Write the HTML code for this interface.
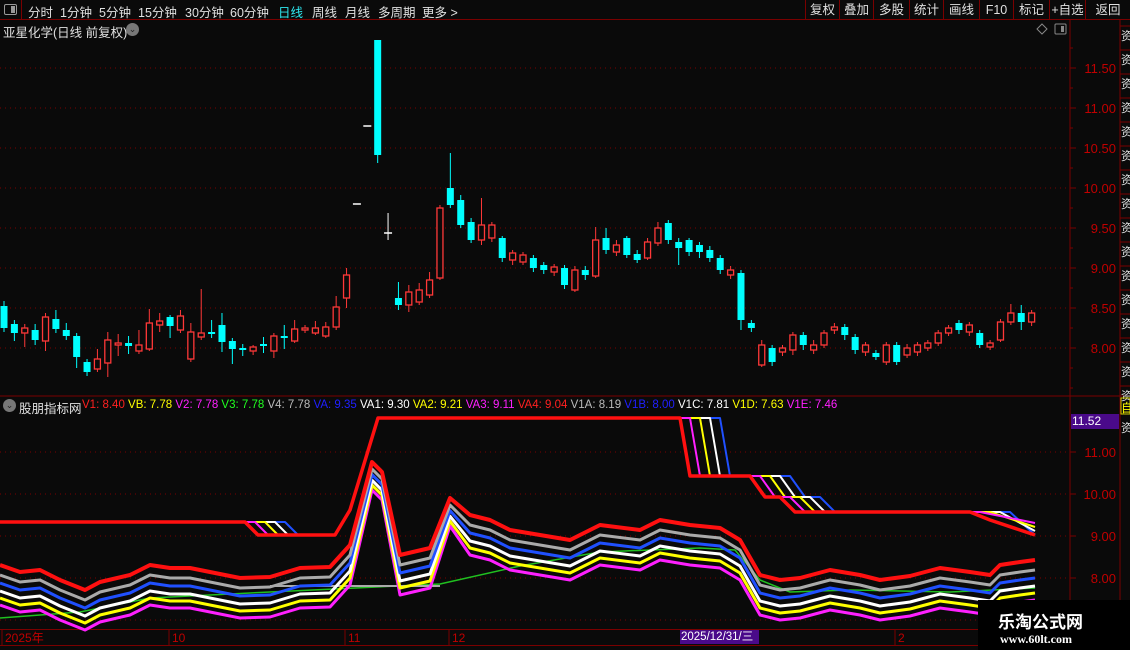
<!DOCTYPE html>
<html><head><meta charset="utf-8"><style>
*{margin:0;padding:0;box-sizing:border-box}
body{width:1130px;height:650px;background:#0a0a0a;overflow:hidden;position:relative;font-family:"Liberation Sans","Noto Sans CJK SC",sans-serif;color:#ddd;font-size:12px}
.top{position:absolute;left:0;top:0;width:1130px;height:20px;border-bottom:1px solid #7a0000;background:#0a0a0a}
.top span{position:absolute;top:2px;font-size:12.5px;color:#e0e0e0}
.btn{position:absolute;top:0;height:20px;border-left:1px solid #7a0000;color:#e0e0e0;font-size:12.5px;text-align:center;line-height:20px}
.abs{position:absolute;white-space:nowrap}
</style></head><body>
<div class="top">
<div class="abs" style="left:0;top:0;width:22px;height:20px;border-right:1px solid #7a0000"><div style="position:absolute;left:4px;top:4px;width:13px;height:11px;border:1px solid #999;border-radius:2px"><div style="position:absolute;right:1px;top:1px;width:4px;height:7px;background:#999"></div></div></div>
<span style="left:28px">分时</span><span style="left:60px">1分钟</span><span style="left:99px">5分钟</span><span style="left:138px">15分钟</span><span style="left:185px">30分钟</span><span style="left:230px">60分钟</span><span style="left:278px;color:#2ee8f0">日线</span><span style="left:312px">周线</span><span style="left:345px">月线</span><span style="left:378px">多周期</span><span style="left:422px">更多 &gt;</span>
<div class="btn" style="left:805px;width:34px">复权</div><div class="btn" style="left:839px;width:34px">叠加</div><div class="btn" style="left:873px;width:36px">多股</div><div class="btn" style="left:909px;width:34px">统计</div><div class="btn" style="left:943px;width:36px">画线</div><div class="btn" style="left:979px;width:34px">F10</div><div class="btn" style="left:1013px;width:36px">标记</div><div class="btn" style="left:1049px;width:36px">+自选</div><div class="btn" style="left:1085px;width:45px">返回</div>
</div>
<div class="abs" style="left:3px;top:22px;font-size:12.5px;color:#e0e0e0">亚星化学(日线 前复权)</div>
<div class="abs" style="left:126px;top:23px;width:13px;height:13px;border-radius:50%;background:#777;color:#222;font-size:9px;text-align:center;line-height:13px">⌄</div>
<div class="abs" style="left:3px;top:399px;width:13px;height:13px;border-radius:50%;background:#777;color:#222;font-size:9px;text-align:center;line-height:13px">⌄</div>
<div class="abs" style="left:19px;top:398px;font-size:12.5px;color:#e0e0e0">股朋指标网</div>
<div class="abs" style="left:82px;top:399px;font-size:11.5px"><span style="color:#ff2020">V1: 8.40</span> <span style="color:#ffff00">VB: 7.78</span> <span style="color:#ff20ff">V2: 7.78</span> <span style="color:#20ff20">V3: 7.78</span> <span style="color:#bbb">V4: 7.78</span> <span style="color:#2020ff">VA: 9.35</span> <span style="color:#fff">VA1: 9.30</span> <span style="color:#ffff00">VA2: 9.21</span> <span style="color:#ff20ff">VA3: 9.11</span> <span style="color:#ff2020">VA4: 9.04</span> <span style="color:#bbb">V1A: 8.19</span> <span style="color:#2020ff">V1B: 8.00</span> <span style="color:#fff">V1C: 7.81</span> <span style="color:#ffff00">V1D: 7.63</span> <span style="color:#ff20ff">V1E: 7.46</span></div>
<svg id="s" class="abs" style="left:0;top:0" width="1130" height="650"></svg>
<div class="abs" style="left:1071px;top:414px;width:48px;height:15px;background:#4a0a8a;color:#fff;font-size:12px;line-height:15px;padding-left:1px">11.52</div>
<div class="abs" style="left:680px;top:630px;width:79px;height:14px;background:#4a0a8a;color:#fff;font-size:11.5px;line-height:14px;padding-left:1px">2025/12/31/三</div>
<div class="abs" style="left:978px;top:600px;width:152px;height:50px;background:#000"></div>
<div class="abs" style="left:998px;top:608px;font-size:17px;font-weight:bold;color:#fff;font-family:'Noto Sans CJK SC',sans-serif">乐淘公式网</div>
<div class="abs" style="left:1000px;top:632px;font-size:12px;font-weight:bold;color:#fff;font-family:'Liberation Serif',serif">www.60lt.com</div>
<script>
const S=document.getElementById('s');let h='';
const R='#ff3838',C='#00ffff',D='#7a0000';
h+=`<line x1="1070" y1="20" x2="1070" y2="650" stroke="${D}"/><line x1="1120" y1="20" x2="1120" y2="650" stroke="${D}"/>`;
h+=`<line x1="0" y1="396" x2="1130" y2="396" stroke="${D}"/><line x1="0" y1="629.5" x2="1070" y2="629.5" stroke="${D}"/><line x1="0" y1="645.5" x2="1070" y2="645.5" stroke="${D}"/>`;
[[11.5,68],[11,108],[10.5,148],[10,188],[9.5,228],[9,268],[8.5,308],[8,348]].forEach(([p,y])=>{h+=`<line x1="0" y1="${y}" x2="1068" y2="${y}" stroke="${D}" stroke-dasharray="1,4"/><line x1="1070" y1="${y}" x2="1076" y2="${y}" stroke="${D}"/><text x="1116" y="${y+5}" fill="#c00000" font-size="13" text-anchor="end">${p.toFixed(2)}</text>`;});
for(let y=48;y<390;y+=20)h+=`<line x1="1070" y1="${y}" x2="1073" y2="${y}" stroke="${D}"/>`;
[[11,452],[10,494],[9,536],[8,578]].forEach(([p,y])=>{h+=`<line x1="0" y1="${y}" x2="1068" y2="${y}" stroke="${D}" stroke-dasharray="1,4"/><line x1="1070" y1="${y}" x2="1076" y2="${y}" stroke="${D}"/><text x="1116" y="${y+5}" fill="#c00000" font-size="13" text-anchor="end">${p.toFixed(2)}</text>`;});
h+=`<line x1="0" y1="620" x2="1068" y2="620" stroke="${D}" stroke-dasharray="1,4"/>`;
for(let y=26;y<395;y+=24)h+=`<text x="1121" y="${y+14}" fill="#ddd" font-size="12">资</text><line x1="1120" y1="${y}" x2="1130" y2="${y}" stroke="${D}"/>`;
h+=`<rect x="1121" y="398" width="9" height="16" fill="none" stroke="#cc0"/><text x="1121" y="412" fill="#ff0" font-size="12">自</text><text x="1121" y="432" fill="#ddd" font-size="12">资</text>`;
h+=`<path d="M1042 24 L1047 29 L1042 34 L1037 29Z" fill="none" stroke="#888"/><rect x="1055" y="24" width="11" height="10" rx="1" fill="none" stroke="#888"/><rect x="1061" y="26" width="3" height="6" fill="#888"/>`;
[['2025年',5],['10',172],['11',348],['12',452],['2',898]].forEach(([t,x])=>{h+=`<text x="${x}" y="642" fill="#c00000" font-size="12">${t}</text><line x1="${x-3}" y1="630" x2="${x-3}" y2="645" stroke="${D}"/>`;});
const K=[[306,328,301,332,C],[324,333,320,341,C],[328,333,324,347,R],[330,340,324,345,C],[317,341,313,351,R],[319,329,310,333,C],[330,336,323,340,C],[336,357,333,368,C],[362,372,359,376,C],[359,369,349,372,R],[340,363,332,377,R],[343,345,334,356,R],[343,346,336,354,C],[345,351,330,354,R],[323,349,309,351,R],[321,325,313,332,R],[317,326,315,338,C],[316,330,310,333,R],[332,359,323,362,R],[333,337,289,340,R],[332,333,320,338,C],[325,342,313,352,C],[341,349,338,364,C],[348,349,344,356,C],[347,351,345,355,R],[344,345,337,353,C],[336,351,333,358,R],[336,337,325,349,C],[329,341,320,343,R],[328,330,325,333,R],[328,333,321,335,R],[327,336,322,338,R],[307,327,296,330,R],[275,298,268,308,R],[204,205,204,205,'#fff'],[126,127,126,127,'#fff'],[40,155,40,163,C],[233,234,213,240,'#fff'],[298,305,282,310,C],[292,305,285,312,R],[290,302,283,305,R],[280,295,272,298,R],[208,278,205,280,R],[188,205,153,208,C],[200,225,195,228,C],[222,240,218,243,C],[225,240,198,245,R],[225,238,222,242,R],[238,258,236,262,C],[253,260,250,265,R],[255,262,252,265,R],[258,268,255,272,C],[265,270,262,274,C],[267,272,264,276,R],[268,285,265,289,C],[270,290,266,292,R],[270,275,266,280,C],[240,276,227,278,R],[238,250,228,254,C],[245,252,240,256,R],[238,255,236,258,C],[254,260,250,263,C],[242,258,238,260,R],[228,243,222,246,R],[223,240,220,244,C],[242,248,238,265,C],[240,252,238,256,C],[245,252,242,258,C],[250,258,246,262,C],[258,270,255,274,C],[270,275,266,279,R],[273,320,270,330,C],[323,328,320,332,C],[345,365,340,367,R],[348,362,345,366,C],[348,352,345,356,R],[335,350,332,355,R],[335,345,332,350,C],[345,350,340,354,R],[333,345,330,348,R],[327,330,323,334,R],[327,335,324,340,C],[337,350,334,354,C],[345,352,342,356,R],[353,357,350,360,C],[345,362,342,365,R],[345,362,342,365,C],[348,355,344,358,R],[345,352,342,356,R],[343,348,340,351,R],[333,343,330,346,R],[328,333,325,336,R],[323,330,320,334,C],[325,332,322,336,R],[333,345,330,348,C],[343,347,340,350,R],[322,340,319,342,R],[313,322,304,325,R],[313,322,305,330,C],[313,322,310,326,R]];
K.forEach((k,i)=>{const x=4+i*10.38;let[o,c,hh,l,col]=k;const t=Math.min(o,c),b=Math.max(o,c);
 if(col==='#fff'){h+=`<line x1="${x-4}" y1="${o}" x2="${x+4}" y2="${o}" stroke="#fff" stroke-width="1.5"/>`;if(l-hh>3)h+=`<line x1="${x}" y1="${hh}" x2="${x}" y2="${l}" stroke="#fff"/>`;return;}
 h+=`<line x1="${x}" y1="${hh}" x2="${x}" y2="${l}" stroke="${col}"/>`;
 if(col===C)h+=`<rect x="${x-3.5}" y="${t}" width="7" height="${Math.max(b-t,2)}" fill="${C}"/>`;
 else h+=`<rect x="${x-3}" y="${t}" width="6" height="${Math.max(b-t,2)}" fill="#0a0a0a" stroke="${R}" stroke-width="1.3"/>`;});
const base=[[0,565],[20,572],[40,570],[60,580],[85,590],[100,582],[130,575],[150,565],[170,568],[190,568],[210,572],[240,578],[270,577],[300,568],[330,567],[350,545],[372,462],[382,472],[400,555],[430,548],[450,498],[470,515],[490,520],[510,530],[540,535],[570,540],[600,525],[640,530],[660,520],[690,525],[720,528],[740,540],[760,575],[780,580],[800,578],[830,570],[860,575],[880,580],[910,576],[940,568],[970,572],[990,575],[1000,565],[1020,562],[1035,560]];
const pl=(pts,col,w)=>`<polyline points="${pts.map(p=>p.join(',')).join(' ')}" fill="none" stroke="${col}" stroke-width="${w}" stroke-linejoin="round"/>`;
h+=pl([[0,618],[80,612],[150,598],[270,592],[440,584],[520,566],[600,552],[700,548],[735,550],[760,580],[790,592],[850,590],[950,592],[1035,588]],'#20c020',1.5);
h+=pl([[270,586],[440,586]],'#aaa',2);
[[40,'#ff20ff'],[33,'#ffff00'],[26,'#ffffff'],[18,'#2050ff'],[10,'#aaaaaa'],[0,'#ff1010']].forEach(([o,c])=>{
 h+=pl(base.map(([x,y])=>[x,y+o*(y<500?0.7:1)]),c,o?3:4);});
const drops=[[245,522,258,535],[680,418,690,476],[750,476,765,497],[780,497,795,512],[970,512,1035,535]];
[[40,'#2050ff'],[30,'#fff'],[20,'#ffff00'],[10,'#ff20ff']].forEach(([o,c])=>{drops.forEach(([x1,y1,x2,y2])=>{
 if(x2-x1>30){h+=pl([[x1,y1],[x1+o,y1],[x2,y2-(40-o)*0.4]],c,2);}
 else h+=pl([[x1,y1],[x1+o,y1],[x2+o,y2],[x2,y2]],c,2);});});
const st=[[0,522],[245,522],[258,535],[335,535],[350,510],[378,418],[680,418],[690,476],[750,476],[765,497],[780,497],[795,512],[970,512],[990,520],[1035,535]];
h+=pl(st,'#ff1010',3.5);
S.innerHTML=h;
</script>
</body></html>
